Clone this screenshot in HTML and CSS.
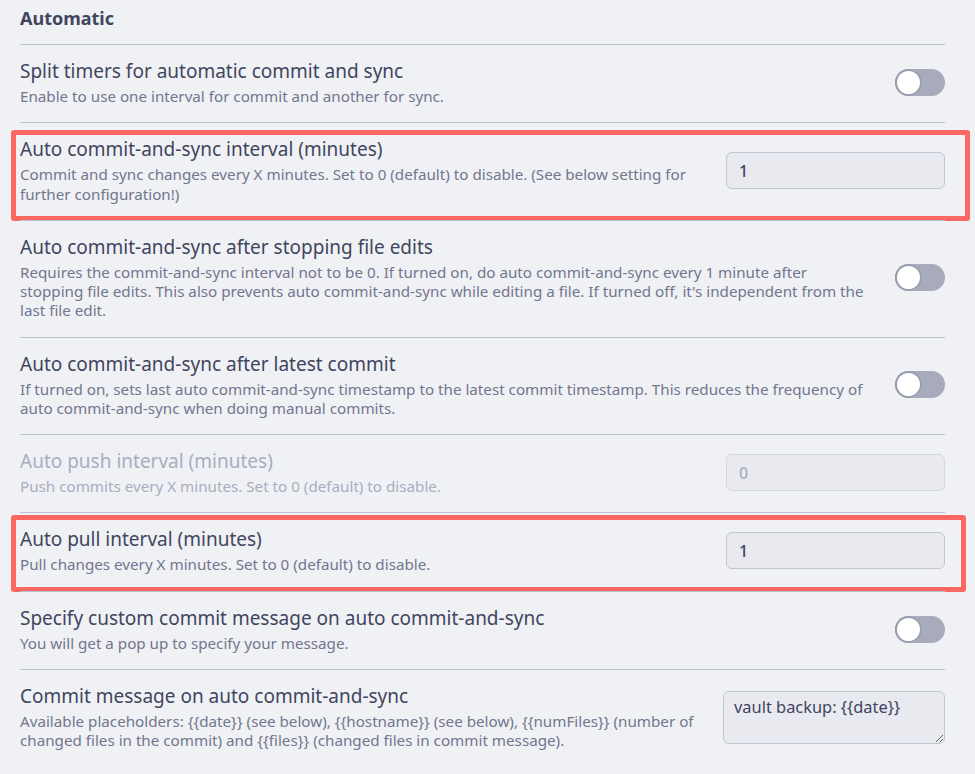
FILE: index.html
```html
<!DOCTYPE html>
<html lang="en">
<head>
    <meta charset="UTF-8">
    <meta name="viewport" content="width=device-width, initial-scale=1.0">
    <title>Automatic settings</title>
    <link rel="stylesheet" href="styles.css">
</head>
<body>
    <div class="settings">
        <h3 class="setting-heading">Automatic</h3>

        <div class="setting-item">
            <div class="setting-info">
                <div class="setting-name">Split timers for automatic commit and sync</div>
                <div class="setting-desc">Enable to use one interval for commit and another for sync.</div>
            </div>
            <div class="setting-control">
                <div class="toggle"></div>
            </div>
        </div>

        <div class="setting-item highlight highlight-wide">
            <div class="setting-info">
                <div class="setting-name">Auto commit-and-sync interval (minutes)</div>
                <div class="setting-desc">Commit and sync changes every X minutes. Set to 0 (default) to disable. (See below setting for further configuration!)</div>
            </div>
            <div class="setting-control">
                <input class="text-input" type="text" value="1">
            </div>
        </div>

        <div class="setting-item">
            <div class="setting-info">
                <div class="setting-name">Auto commit-and-sync after stopping file edits</div>
                <div class="setting-desc">Requires the commit-and-sync interval not to be 0. If turned on, do auto commit-and-sync every 1 minute after stopping file edits. This also prevents auto commit-and-sync while editing a file. If turned off, it's independent from the last file edit.</div>
            </div>
            <div class="setting-control">
                <div class="toggle"></div>
            </div>
        </div>

        <div class="setting-item">
            <div class="setting-info">
                <div class="setting-name">Auto commit-and-sync after latest commit</div>
                <div class="setting-desc">If turned on, sets last auto commit-and-sync timestamp to the latest commit timestamp. This reduces the frequency of auto commit-and-sync when doing manual commits.</div>
            </div>
            <div class="setting-control">
                <div class="toggle"></div>
            </div>
        </div>

        <div class="setting-item disabled">
            <div class="setting-info">
                <div class="setting-name">Auto push interval (minutes)</div>
                <div class="setting-desc">Push commits every X minutes. Set to 0 (default) to disable.</div>
            </div>
            <div class="setting-control">
                <input class="text-input" type="text" value="0" disabled>
            </div>
        </div>

        <div class="setting-item highlight highlight-narrow">
            <div class="setting-info">
                <div class="setting-name">Auto pull interval (minutes)</div>
                <div class="setting-desc">Pull changes every X minutes. Set to 0 (default) to disable.</div>
            </div>
            <div class="setting-control">
                <input class="text-input" type="text" value="1">
            </div>
        </div>

        <div class="setting-item">
            <div class="setting-info">
                <div class="setting-name">Specify custom commit message on auto commit-and-sync</div>
                <div class="setting-desc">You will get a pop up to specify your message.</div>
            </div>
            <div class="setting-control">
                <div class="toggle"></div>
            </div>
        </div>

        <div class="setting-item">
            <div class="setting-info">
                <div class="setting-name">Commit message on auto commit-and-sync</div>
                <div class="setting-desc">Available placeholders: {{date}} (see below), {{hostname}} (see below), {{numFiles}} (number of changed files in the commit) and {{files}} (changed files in commit message).</div>
            </div>
            <div class="setting-control">
                <textarea class="text-area">vault backup: {{date}}</textarea>
            </div>
        </div>
    </div>
</body>
</html>
```

FILE: styles.css
```css
body {
    margin: 0;
    background-color: #eff1f5;
    font-family: 'Noto Sans', 'Open Sans', sans-serif;
    color: #41455e;
}
.settings {
    padding: 0 30px 0 20px;
}
.setting-heading {
    margin: 0;
    padding: 6px 0 14px;
    font-size: 18px;
    line-height: 24px;
    font-weight: 700;
    color: #41455e;
}
.setting-item {
    position: relative;
    display: flex;
    align-items: center;
    border-top: 1px solid #bcc0cf;
    padding: 14px 0 16px;
}
.setting-info {
    flex: 1 1 auto;
    min-width: 0;
}
.setting-name {
    font-size: 19px;
    line-height: 24px;
    color: #41455e;
}
.setting-desc {
    margin-top: 4px;
    font-size: 15.2px;
    line-height: 19.25px;
    color: #72768e;
}
.setting-control {
    flex: 0 0 auto;
    margin-left: 22px;
    display: flex;
    justify-content: flex-end;
}
.disabled .setting-name,
.disabled .setting-desc {
    color: #a9adbf;
}
.disabled .text-input {
    color: #a9adbf;
    border-color: #d3d6df;
}

/* red annotation frames */
.highlight::after {
    content: '';
    position: absolute;
    left: -9px;
    bottom: -1px;
    border: 5px solid #fc6761;
    border-radius: 3px;
    pointer-events: none;
}
.highlight-wide::after {
    top: 7px;
    right: -25px;
}
.highlight-narrow::after {
    top: 2px;
    right: -21px;
}

.toggle {
    position: relative;
    width: 50px;
    height: 27px;
    border-radius: 14px;
    background-color: #a7abbb;
    box-shadow: inset 2px 0 0 #9598aa;
}
.toggle::after {
    content: '';
    position: absolute;
    left: 2px;
    top: 2px;
    width: 23px;
    height: 23px;
    border-radius: 50%;
    background-color: #fff;
    box-shadow: 0 0 0 1.5px #979bad;
}
.text-input {
    width: 219px;
    height: 37px;
    box-sizing: border-box;
    padding: 0 12px;
    border: 1px solid #c2c5d1;
    border-radius: 6px;
    background-color: #e8eaf0;
    font-family: 'Noto Sans', 'Open Sans', sans-serif;
    font-size: 16px;
    font-weight: 500;
    color: #3f4461;
    outline: none;
}
.text-area {
    width: 222px;
    height: 53px;
    box-sizing: border-box;
    padding: 4px 10px;
    border: 1px solid #c2c5d1;
    border-radius: 6px;
    background-color: #e8eaf0;
    font-family: 'Noto Sans', 'Open Sans', sans-serif;
    font-size: 16.4px;
    line-height: 22px;
    color: #3f4461;
    outline: none;
    resize: both;
}
```
